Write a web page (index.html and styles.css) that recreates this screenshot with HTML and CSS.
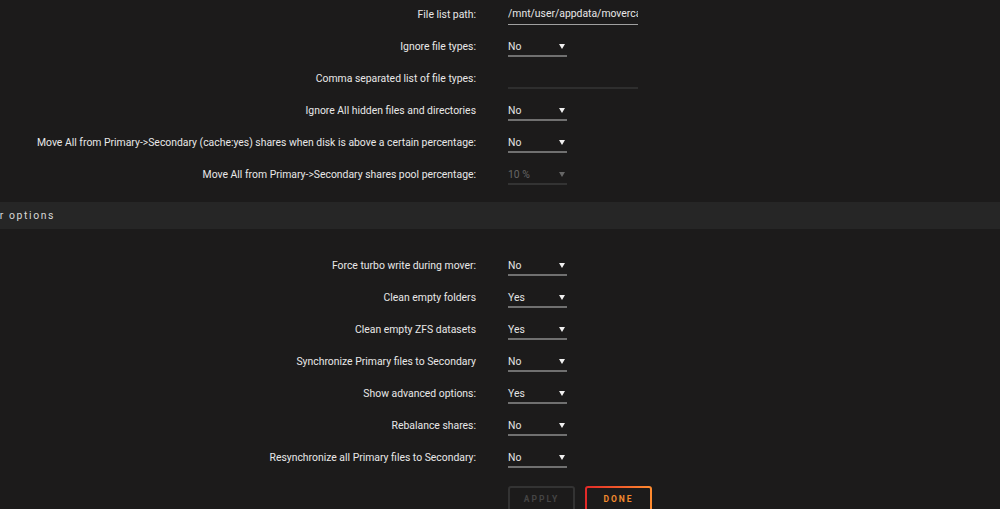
FILE: index.html
```html
<!DOCTYPE html>
<html>
<head>
    <meta charset="utf-8">
    <link rel="stylesheet" href="styles.css">
</head>
<body>
    <div class="settings first">
        <div class="row">
            <span class="label">File list path:</span>
            <span class="field"><span class="text-input">/mnt/user/appdata/movercache/filelist.txt</span></span>
        </div>
        <div class="row">
            <span class="label">Ignore file types:</span>
            <span class="field"><span class="select">No</span></span>
        </div>
        <div class="row">
            <span class="label">Comma separated list of file types:</span>
            <span class="field"><span class="text-input empty"></span></span>
        </div>
        <div class="row">
            <span class="label">Ignore All hidden files and directories</span>
            <span class="field"><span class="select">No</span></span>
        </div>
        <div class="row">
            <span class="label">Move All from Primary-&gt;Secondary (cache:yes) shares when disk is above a certain percentage:</span>
            <span class="field"><span class="select">No</span></span>
        </div>
        <div class="row">
            <span class="label">Move All from Primary-&gt;Secondary shares pool percentage:</span>
            <span class="field"><span class="select disabled">10 %</span></span>
        </div>
    </div>

    <div class="title"><span class="title-text">Mover options</span></div>

    <div class="settings">
        <div class="row">
            <span class="label">Force turbo write during mover:</span>
            <span class="field"><span class="select">No</span></span>
        </div>
        <div class="row">
            <span class="label">Clean empty folders</span>
            <span class="field"><span class="select">Yes</span></span>
        </div>
        <div class="row">
            <span class="label">Clean empty ZFS datasets</span>
            <span class="field"><span class="select">Yes</span></span>
        </div>
        <div class="row">
            <span class="label">Synchronize Primary files to Secondary</span>
            <span class="field"><span class="select">No</span></span>
        </div>
        <div class="row">
            <span class="label">Show advanced options:</span>
            <span class="field"><span class="select">Yes</span></span>
        </div>
        <div class="row">
            <span class="label">Rebalance shares:</span>
            <span class="field"><span class="select">No</span></span>
        </div>
        <div class="row">
            <span class="label">Resynchronize all Primary files to Secondary:</span>
            <span class="field"><span class="select">No</span></span>
        </div>
        <div class="buttons">
            <button class="button button-disabled">APPLY</button>
            <button class="button button-done">DONE</button>
        </div>
    </div>
</body>
</html>
```

FILE: styles.css
```css
body {
    margin: 0;
    background: #1c1b1b;
    color: #f2f2f2;
    font-family: Roboto, "Noto Sans", sans-serif;
    font-size: 10.4px;
    overflow: hidden;
}

.settings {
    display: flex;
    flex-direction: column;
}

.settings.first {
    margin-top: -2px;
    margin-bottom: 12px;
}

.row {
    display: grid;
    grid-template-columns: 476px 1fr;
    column-gap: 32px;
    height: 32px;
    align-items: center;
}

.label {
    text-align: right;
    color: #e8e8e8;
    white-space: nowrap;
}

.field {
    display: flex;
    align-items: center;
}

.select {
    position: relative;
    box-sizing: border-box;
    width: 59px;
    height: 22px;
    padding-top: 5px;
    color: #e4e4e4;
    border-bottom: 2px solid #707070;
}

.select::after {
    content: "";
    position: absolute;
    right: 2px;
    top: 9px;
    border-left: 3px solid transparent;
    border-right: 3px solid transparent;
    border-top: 5px solid #f0f0f0;
}

.select.disabled {
    color: #666;
    border-bottom-color: #333;
}

.select.disabled::after {
    border-top-color: #666;
}

.text-input {
    box-sizing: border-box;
    width: 130px;
    height: 22px;
    padding-top: 4px;
    overflow: hidden;
    white-space: nowrap;
    color: #e8e8e8;
    border-bottom: 1px solid #a0a0a0;
}

.text-input.empty {
    border-bottom: 2px solid #2e2e2e;
}

.title {
    height: 27px;
    background: #262626;
    display: flex;
    align-items: center;
    overflow: hidden;
    margin-bottom: 20px;
}

.title-text {
    margin-left: -32px;
    letter-spacing: 1.6px;
    color: #d8d8d8;
}

.buttons {
    display: flex;
    gap: 10px;
    margin-top: 13px;
    padding-left: 508px;
}

.button {
    box-sizing: border-box;
    width: 67px;
    height: 30px;
    border-radius: 3px;
    background: transparent;
    font-family: Roboto, sans-serif;
    font-size: 8.5px;
    font-weight: bold;
    letter-spacing: 2px;
    padding: 0 0 4px 0;
}

.button-disabled {
    border: 2px solid #333;
    color: #444;
}

.button-done {
    border: 2px solid transparent;
    color: #f28a2e;
    background: linear-gradient(#1c1b1b, #1c1b1b) padding-box,
        linear-gradient(90deg, #e22828, #ff8c2f) border-box;
}
```
